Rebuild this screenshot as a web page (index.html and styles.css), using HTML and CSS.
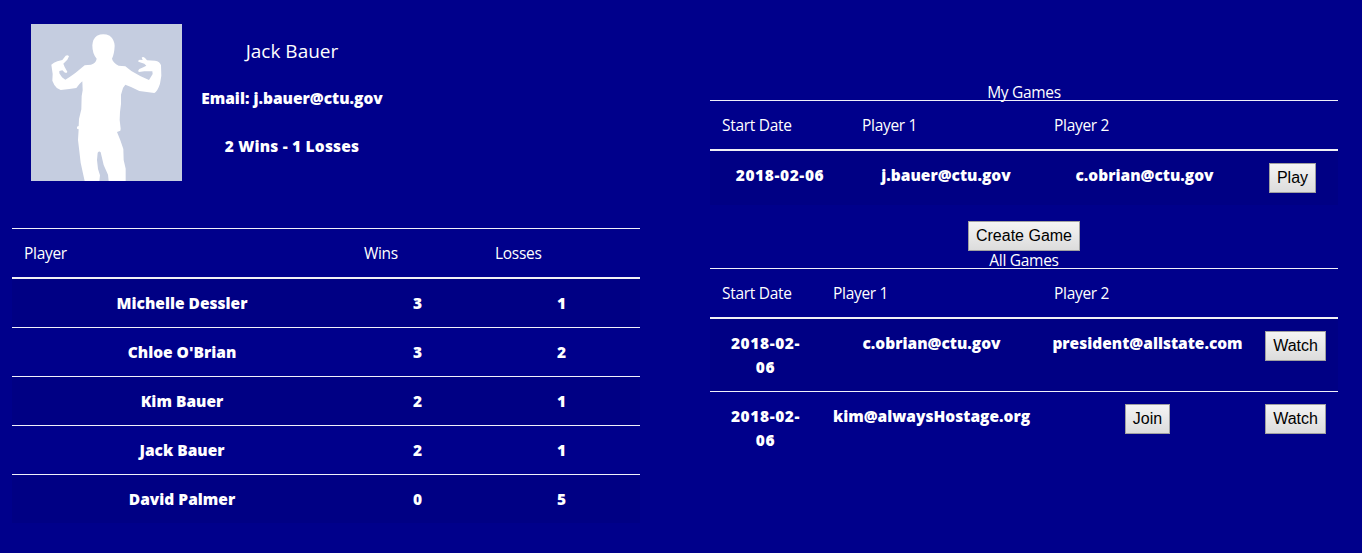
FILE: index.html
```html
<!DOCTYPE html>
<html lang="en">
<head>
<meta charset="utf-8">
<title>Games</title>
<link rel="stylesheet" href="styles.css">
</head>
<body>
<main class="page">
  <section class="left">
    <div class="profile">
      <svg class="avatar" viewBox="33 30 453 471" preserveAspectRatio="none" role="img" aria-label="Avatar">
        <rect x="33" y="30" width="453" height="471" fill="#c5cde0"/>
        <path fill="#fff" d="M230 134 Q217 120 217 94 Q218 74 231 65 Q250 57 269 65 Q283 76 284 95 Q283 119 276 134 Q279 146 296 155 L316 157 L334 171 L362 187 L387 198 L398 180 L397 172 L373 172 L357 174 Q352 171 358 165 L370 160 L379 155 L373 149 L355 143 Q353 138 359 137 L368 138 L365 131 Q369 127 375 132 L381 139 L405 140 Q420 142 423 154 L424 185 L420 209 Q413 231 403 237 L386 235 L358 231 L333 219 L316 212 L309 222 L303 242 L303 270 L300 294 L299 318 L302 344 L301 350 L291 354 L301 379 L310 405 L311 438 L317 464 L317 501 L266 501 L264 482 L251 453 L242 415 Q238 409 233 416 L231 438 L234 465 L240 484 L238 501 L194 501 L190 483 L182 446 L178 412 L174 378 L176 346 L171 344 L171 338 L176 336 L177 315 L184 286 L185 246 L188 229 L187 202 L179 209 L169 222 L148 225 L122 228 Q109 224 103 213 L97 200 L98 180 L94 152 Q101 146 112 142 L127 138 L137 125 Q143 121 147 127 L142 137 L130 149 L134 159 L142 173 Q141 178 135 176 L127 169 L118 171 L118 178 L126 190 L136 197 L149 189 L166 177 L194 154 L213 152 Q228 147 230 134Z"/>
      </svg>
      <div class="bio">
        <div class="name">Jack Bauer</div>
        <div class="strong">Email: j.bauer@ctu.gov</div>
        <div class="strong record">2 Wins - 1 Losses</div>
      </div>
    </div>
    <table class="table">
      <colgroup><col class="w340"><col class="w131"><col class="w157"></colgroup>
      <thead><tr><td>Player</td><td>Wins</td><td>Losses</td></tr></thead>
      <tbody>
        <tr><th>Michelle Dessler</th><th>3</th><th>1</th></tr>
        <tr><th>Chloe O'Brian</th><th>3</th><th>2</th></tr>
        <tr><th>Kim Bauer</th><th>2</th><th>1</th></tr>
        <tr><th>Jack Bauer</th><th>2</th><th>1</th></tr>
        <tr><th>David Palmer</th><th>0</th><th>5</th></tr>
      </tbody>
    </table>
  </section>
  <section class="right">
    <div class="title">My Games</div>
    <table class="table">
      <colgroup><col class="w140"><col class="w192"><col class="w205"><col class="w91"></colgroup>
      <thead><tr><td>Start Date</td><td>Player 1</td><td>Player 2</td><td></td></tr></thead>
      <tbody>
        <tr><th class="date">2018-02-06</th><th>j.bauer@ctu.gov</th><th>c.obrian@ctu.gov</th><th><button class="btn play">Play</button></th></tr>
      </tbody>
    </table>
    <button class="btn create">Create Game</button>
    <div class="title all">All Games</div>
    <table class="table">
      <colgroup><col class="w111"><col class="w221"><col class="w211"><col class="w85"></colgroup>
      <thead><tr><td>Start Date</td><td>Player 1</td><td>Player 2</td><td></td></tr></thead>
      <tbody>
        <tr><th class="date">2018-02-<br>06</th><th>c.obrian@ctu.gov</th><th>president@allstate.com</th><th><button class="btn watch">Watch</button></th></tr>
        <tr><th class="date">2018-02-<br>06</th><th>kim@alwaysHostage.org</th><th><button class="btn join">Join</button></th><th><button class="btn watch">Watch</button></th></tr>
      </tbody>
    </table>
  </section>
</main>
</body>
</html>
```
FILE: styles.css
```css
* { box-sizing: border-box; }
body {
  margin: 0;
  background: #00008b;
  color: #fff;
  font: 15.5px/24px "Open Sans", "Noto Sans", sans-serif;
  letter-spacing: -0.3px;
}
.page {
  display: flex;
  gap: 70px;
  height: 553px;
  padding: 24px 24px 0 12px;
  overflow: hidden;
}
.left, .right { width: 628px; flex: none; }
.right {
  display: flex;
  flex-direction: column;
  align-items: center;
  padding-top: 56px;
}
.profile {
  display: flex;
  gap: 19px;
  height: 204px;
  padding-left: 19px;
}
.avatar { width: 151px; height: 157px; }
.bio { width: 182px; text-align: center; padding-top: 15px; white-space: nowrap; }
.name { font-size: 19px; letter-spacing: 0; margin-bottom: 23px; }
.strong, th { font-weight: 800; letter-spacing: 0; }
.strong { margin-bottom: 24px; }
.record { letter-spacing: 0.2px; }
.date { letter-spacing: 0.6px; }
.table {
  width: 628px;
  table-layout: fixed;
  border-spacing: 0;
}
td, th { padding: 12px 0; vertical-align: top; white-space: nowrap; }
td { padding-left: 12px; border-top: 1px solid #f0f0fa; border-bottom: 2px solid #f0f0f5; }
tbody tr:nth-child(odd) { background: #000084; }
tbody tr + tr th { border-top: 1px solid #f0f0fa; }
.title { margin-bottom: -4px; }
.all { margin-top: -3px; }
.btn {
  display: block;
  height: 30px;
  margin: 0 auto;
  padding: 0;
  border: 1px solid #a0a0a0;
  border-radius: 0;
  background: linear-gradient(#f4f4f4, #dcdcdc);
  color: #000;
  font: 16px/26px "Liberation Sans", Arial, sans-serif;
  letter-spacing: 0;
}
.play { width: 47px; }
.watch { width: 61px; }
.join { width: 45px; }
.create { width: 112px; margin-top: 16px; }
.w340 { width: 340px; }
.w131 { width: 131px; }
.w157 { width: 157px; }
.w140 { width: 140px; }
.w192 { width: 192px; }
.w205 { width: 205px; }
.w91 { width: 91px; }
.w111 { width: 111px; }
.w221 { width: 221px; }
.w211 { width: 211px; }
.w85 { width: 85px; }
```
